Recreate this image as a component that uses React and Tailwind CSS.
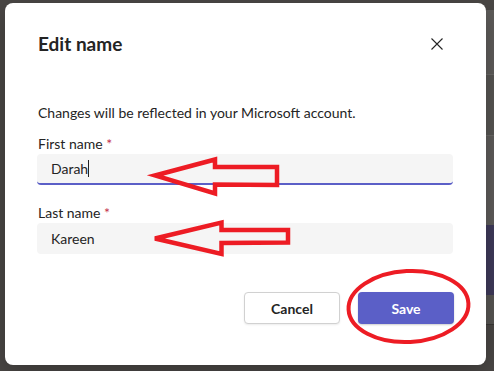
import React from "react";

const font = { fontFamily: '"Segoe UI", Lato, "Noto Sans", sans-serif' };

function Background() {
  return (
    <div className="flex h-full w-full">
      <div className="w-[486px] h-full bg-[#4a4745]" />
      <div className="flex-1 flex flex-col">
        <div className="h-[10px] bg-[#4a4745]" />
        <div className="h-[65px] bg-[#5e5c5a] border-b border-[#6b6967]" />
        <div className="h-[60px] bg-[#575553]" />
        <div className="h-[90px] bg-[#5e5c5a] border-t border-[#6b6967]" />
        <div className="h-[70px] bg-[#3f3a5a]" />
        <div className="h-[30px] bg-[#575553] border-b border-[#3a3836]" />
        <div className="flex-1 bg-[#4a4745]" />
      </div>
    </div>
  );
}

function Annotations() {
  return (
    <svg className="absolute inset-0 pointer-events-none" width="494" height="371" viewBox="0 0 494 371">
      <polygon
        points="155,175.5 215,159.5 215,167 277,167 277,185 215,184.5 215,193.5"
        fill="none"
        stroke="#ed1c24"
        strokeWidth="4.5"
        strokeLinejoin="miter"
      />
      <polygon
        points="155,238.5 221.5,222.5 221.5,230 288,230 288,242.5 221.5,243 221.5,254"
        fill="none"
        stroke="#ed1c24"
        strokeWidth="4.5"
        strokeLinejoin="miter"
      />
      <ellipse cx="408.5" cy="306.5" rx="60" ry="35.5" fill="none" stroke="#ed1c24" strokeWidth="4" transform="rotate(-3 408.5 306.5)" />
    </svg>
  );
}

export default function App() {
  return (
    <div className="relative w-[494px] h-[371px] overflow-hidden" style={font}>
      <Background />
      <div className="absolute left-[5px] top-[3px] w-[481px] h-[362px] bg-white rounded-[8px] shadow-[0_8px_24px_rgba(0,0,0,0.25)] px-8 pt-[27px] text-[#242424]">
        <div className="flex items-center justify-between h-[28px]">
          <div className="text-[19px] leading-[28px] font-bold pl-px">Edit name</div>
          <svg width="12" height="12" viewBox="0 0 12 12" className="mr-[11px]">
            <path d="M0.5 0.5 L11.5 11.5 M11.5 0.5 L0.5 11.5" stroke="#242424" strokeWidth="1.1" />
          </svg>
        </div>
        <div className="mt-[45px] text-[14px] leading-[20px] pl-px">Changes will be reflected in your Microsoft account.</div>
        <div className="mt-[11px] text-[14px] leading-[20px] pl-px">
          First name <span className="text-[#c4314b]">*</span>
        </div>
        <div className="h-[31px] w-[416px] bg-[#f5f5f5] rounded-[4px] border-b-2 border-[#5b5fc7] flex items-center pl-[14px] text-[14px]">
          <span>Darah</span>
          <span className="inline-block w-px h-[17px] bg-[#242424]" />
        </div>
        <div className="mt-[18px] text-[14px] leading-[20px] pl-px">
          Last name <span className="text-[#c4314b]">*</span>
        </div>
        <div className="h-[31px] w-[416px] bg-[#f5f5f5] rounded-[4px] flex items-center pl-[14px] text-[14px]">
          <span>Kareen</span>
        </div>
        <div className="mt-[38px] flex justify-end gap-[18px] w-[417px]">
          <button className="h-[32px] w-[96px] rounded-[4px] border border-[#d1d1d1] bg-white text-[14px] font-bold text-[#242424] shadow-[0_1px_2px_rgba(0,0,0,0.08)]">
            Cancel
          </button>
          <button className="h-[32px] w-[96px] rounded-[4px] bg-[#5b5fc7] text-[14px] font-bold text-white shadow-[0_1px_2px_rgba(0,0,0,0.2)]">
            Save
          </button>
        </div>
      </div>
      <Annotations />
    </div>
  );
}
